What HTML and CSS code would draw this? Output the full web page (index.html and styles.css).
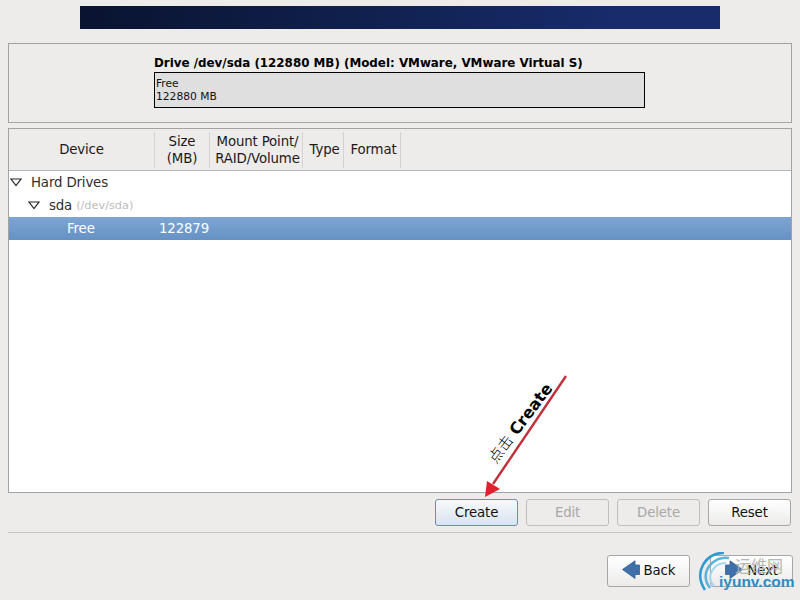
FILE: index.html
```html
<!DOCTYPE html>
<html lang="en">

<head>
    <meta name="viewport" content="width=device-width, initial-scale=1">
    <meta charset="utf-8">
    <title>Partitioning</title>
    <link rel="stylesheet" href="styles.css">
</head>

<body>
    <div class="banner"></div>

    <div class="drive-panel">
        <div class="drive">
            <div class="drive-title">Drive /dev/sda (122880 MB) (Model: VMware, VMware Virtual S)</div>
            <div class="drive-bar">Free<br>122880 MB</div>
        </div>
    </div>

    <div class="tree">
        <div class="tree-head">
            <div class="col col-device">Device</div>
            <div class="col col-size">Size<br>(MB)</div>
            <div class="col col-mount">Mount Point/<br>RAID/Volume</div>
            <div class="col col-type">Type</div>
            <div class="col col-format">Format</div>
        </div>
        <div class="row row-drives">
            <svg class="expander" width="12" height="9" viewBox="0 0 12 9"><path d="M1 1 H11 L6 7.5 Z" fill="#fff" stroke="#222" stroke-width="1.2"/></svg>
            Hard Drives
        </div>
        <div class="row row-sda">
            <svg class="expander" width="12" height="9" viewBox="0 0 12 9"><path d="M1 1 H11 L6 7.5 Z" fill="#fff" stroke="#222" stroke-width="1.2"/></svg>
            sda <span class="hint">(/dev/sda)</span>
        </div>
        <div class="row row-free selected"><span class="free-name">Free</span><span>122879</span></div>
    </div>

    <div class="actions">
        <button type="button" class="btn btn-focus">Create</button>
        <button type="button" class="btn" disabled>Edit</button>
        <button type="button" class="btn" disabled>Delete</button>
        <button type="button" class="btn">Reset</button>
    </div>

    <hr class="sep">

    <div class="nav">
        <button type="button" class="btn btn-nav">
            <svg width="18" height="20" viewBox="0 0 18 20"><path d="M0.5 9.5 L13 0.8 V5 H17.5 V14.5 H13 V18.5 Z" fill="#3f70aa" stroke="#34608f" stroke-width="0.8"/></svg>
            Back
        </button>
        <button type="button" class="btn btn-nav">
            <svg width="18" height="20" viewBox="0 0 18 20"><path d="M17.5 9.5 L5 0.8 V5 H0.5 V14.5 H5 V18.5 Z" fill="#3f70aa" stroke="#34608f" stroke-width="0.8"/></svg>
            Next
        </button>
    </div>

    <!-- annotation drawn on top of the screenshot -->
    <svg class="arrow" width="800" height="600" viewBox="0 0 800 600">
        <line x1="566" y1="376" x2="493" y2="484" stroke="#c0303a" stroke-width="2.4"/>
        <path d="M485 497 L487 481 L500 489 Z" fill="#e0202c"/>
    </svg>
    <div class="note"><span class="note-cn">点击</span> <b>Create</b></div>

    <div class="mark">
        <svg width="60" height="48" viewBox="0 0 60 48">
            <path d="M28 1 C10 0 -3 20 9 38" fill="none" stroke="#2f9bd0" stroke-width="2.5"/>
            <path d="M33 6 C17 3 2 21 14 36" fill="none" stroke="#5cb4dc" stroke-width="2.5"/>
            <path d="M30 11 C18 11 9 24 18 34" fill="none" stroke="#a5d8ee" stroke-width="2"/>
        </svg>
        <span class="mark-cn">运维网</span>
        <span class="mark-en">iyunv.com</span>
    </div>
</body>

</html>
```

FILE: styles.css
```css
* {
    box-sizing: border-box;
}

html,
body {
    margin: 0;
    height: 600px;
    overflow: hidden;
}

body {
    position: relative;
    background: #edeceb;
    padding: 6px 8px 0;
    font-family: "DejaVu Sans", sans-serif;
    font-size: 13.33px;
    letter-spacing: -0.15px;
    color: #1a1a1a;
}

.banner {
    width: 640px;
    height: 23px;
    margin: 0 auto 14px;
    background: linear-gradient(90deg, #0a1330 0%, #10214f 45%, #182c6c 85%, #182c6c 100%);
}

.drive-panel {
    height: 80px;
    border: 1px solid #a3a3a3;
    padding: 11px 0 0 145px;
    letter-spacing: 0;
}

.drive-title {
    font-weight: bold;
    font-size: 11.88px;
    line-height: 16px;
    color: #000;
}

.drive-bar {
    width: 491px;
    height: 36px;
    margin-top: 1px;
    padding: 4px 1px;
    border: 1px solid #000;
    background: #dfdfdf;
    font-size: 10.7px;
    line-height: 13px;
    color: #111;
}

.tree {
    height: 365px;
    margin-top: 5px;
    border: 1px solid #a3a3a3;
    background: #fff;
}

.tree-head {
    display: flex;
    height: 42px;
    background: #edeceb;
    border-bottom: 1px solid #b5b5b5;
    align-items: center;
}

.col {
    height: 36px;
    display: flex;
    align-items: center;
    justify-content: center;
    text-align: center;
    line-height: 17px;
    border-right: 1px solid #d4d3d2;
}

.col-device {
    width: 146px;
}

.col-size {
    width: 55px;
}

.col-mount {
    width: 93px;
    padding-left: 3px;
}

.col-type {
    width: 41px;
    padding-left: 3px;
}

.col-format {
    width: 57px;
    padding-left: 3px;
}

.row {
    height: 23px;
    display: flex;
    align-items: center;
    padding-bottom: 1px;
    color: #2e2e2e;
}

.expander {
    margin-right: 9px;
    flex: none;
}

.row-drives {
    padding-left: 1px;
}

.row-sda {
    padding-left: 19px;
}

.hint {
    margin-left: 4px;
    font-size: 11.3px;
    letter-spacing: 0;
    color: #bdbdbd;
}

.row-free {
    padding-left: 58px;
}

.free-name {
    width: 92px;
}

.selected {
    color: #fff;
    background: linear-gradient(180deg, #7ea5d2, #6592c4);
}

.actions {
    display: flex;
    justify-content: flex-end;
    gap: 8px;
    margin-top: 6px;
    margin-right: 1px;
}

.btn {
    width: 83px;
    height: 27px;
    padding: 0;
    border: 1px solid #a8a7a6;
    border-radius: 3px;
    background: linear-gradient(180deg, #ffffff, #ecebea);
    font: inherit;
    letter-spacing: inherit;
    color: #111;
}

.btn:disabled {
    color: #a8a8a8;
    background: #edeceb;
    border-color: #c0bfbe;
}

.btn-focus {
    border-color: #6d8fb3;
    background: linear-gradient(180deg, #f6f9fc, #d9e4ef);
}

.sep {
    height: 1px;
    margin: 6px 0 0;
    border: 0;
    background: #c6c5c4;
}

.nav {
    display: flex;
    justify-content: flex-end;
    gap: 20px;
    margin-top: 22px;
    margin-right: -1px;
}

.btn-nav {
    display: flex;
    align-items: center;
    justify-content: center;
    gap: 4px;
    height: 32px;
    padding-bottom: 2px;
}

.arrow {
    position: absolute;
    left: 0;
    top: 0;
}

.note {
    position: absolute;
    left: 469px;
    top: 406px;
    width: 110px;
    transform: rotate(-53deg);
    white-space: nowrap;
    font-size: 16px;
    letter-spacing: 0;
    color: #000;
}

.note-cn {
    font-family: "Noto Sans CJK SC", serif;
    font-size: 15px;
    font-weight: 300;
}

.mark {
    position: absolute;
    left: 696px;
    top: 552px;
    width: 104px;
    height: 48px;
    letter-spacing: 0;
}

.mark svg {
    position: absolute;
    left: 0;
    top: 0;
}

.mark-cn {
    position: absolute;
    left: 39px;
    top: 3px;
    font-family: "Noto Sans CJK SC", sans-serif;
    font-size: 16px;
    line-height: 20px;
    color: #b4b4b4;
}

.mark-en {
    position: absolute;
    left: 23px;
    top: 21px;
    font-family: "Liberation Sans", sans-serif;
    font-size: 15.5px;
    line-height: 18px;
    font-weight: bold;
    color: #2d8cc4;
}
```
